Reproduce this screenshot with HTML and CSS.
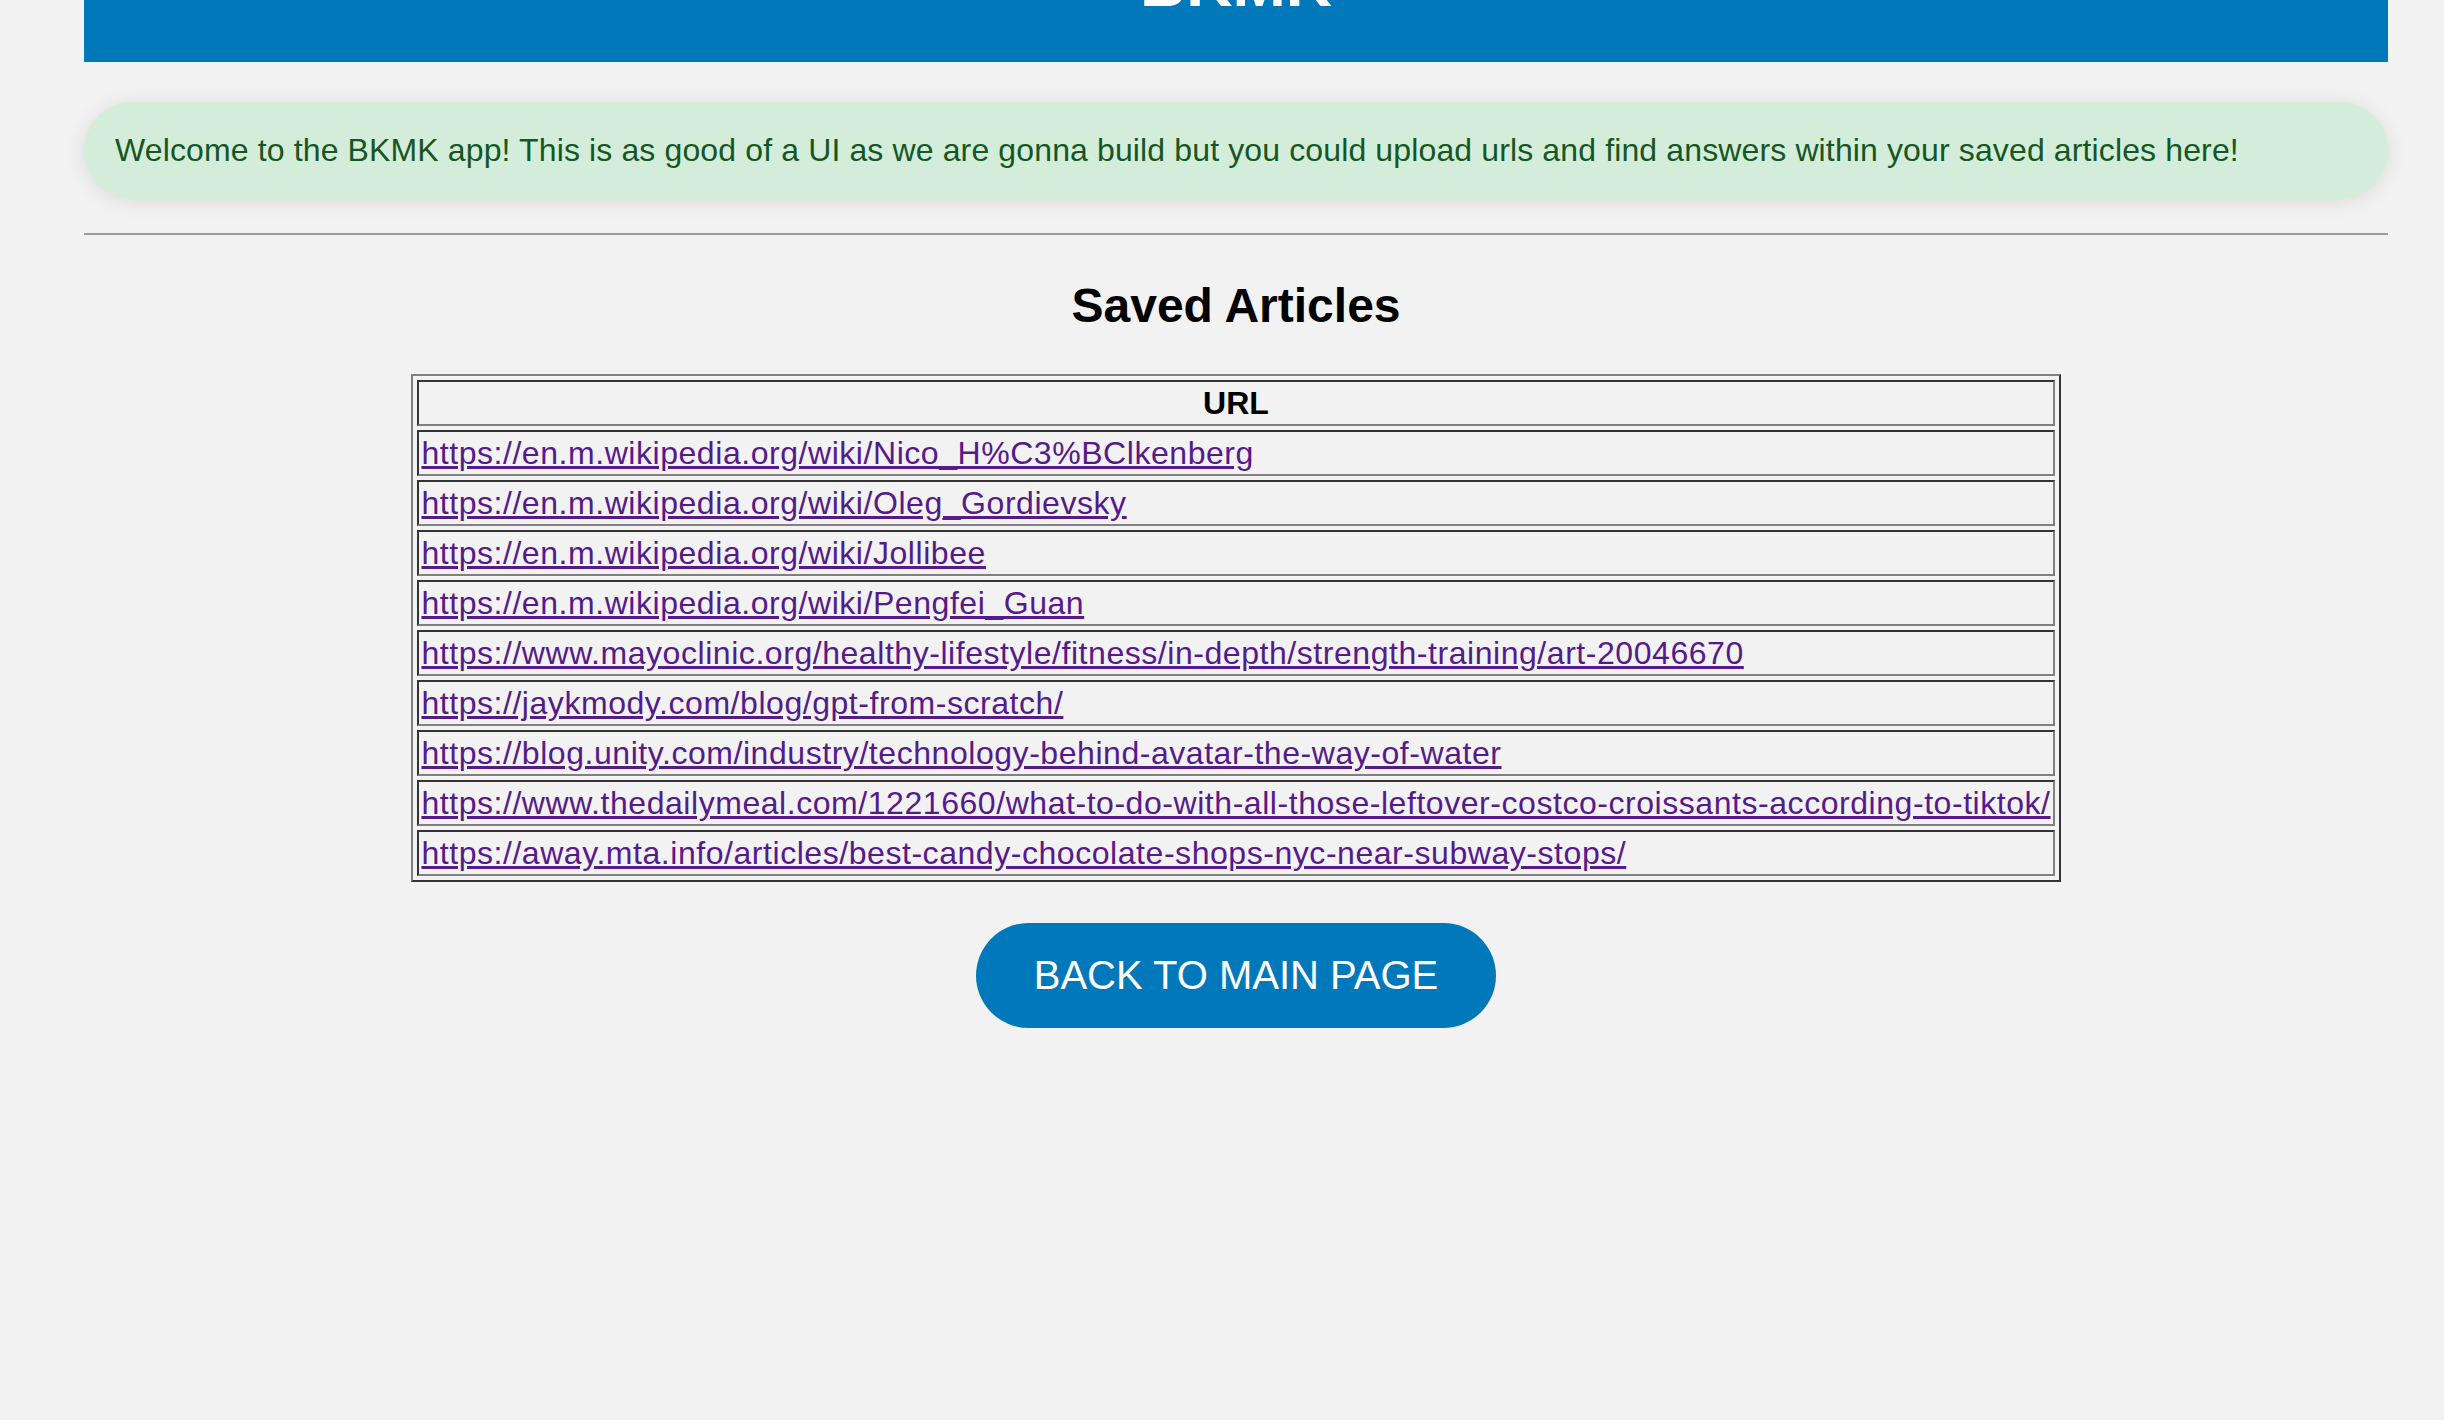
FILE: index.html
```html
<!DOCTYPE html>
<html lang="en">
<head>
<meta charset="utf-8">
<title>BKMK</title>
<link rel="stylesheet" href="styles.css">
</head>
<body>
<div class="page">
  <header class="site-header">
    <h1 class="site-title">BKMK</h1>
  </header>

  <div class="welcome">Welcome to the BKMK app! This is as good of a UI as we are gonna build but you could upload urls and find answers within your saved articles here!</div>

  <hr class="divider">

  <h2 class="section-title">Saved Articles</h2>

  <div class="table-wrap">
    <table class="articles">
      <thead>
        <tr><th>URL</th></tr>
      </thead>
      <tbody>
        <tr><td><a href="#">https://en.m.wikipedia.org/wiki/Nico_H%C3%BClkenberg</a></td></tr>
        <tr><td><a href="#">https://en.m.wikipedia.org/wiki/Oleg_Gordievsky</a></td></tr>
        <tr><td><a href="#">https://en.m.wikipedia.org/wiki/Jollibee</a></td></tr>
        <tr><td><a href="#">https://en.m.wikipedia.org/wiki/Pengfei_Guan</a></td></tr>
        <tr><td><a href="#">https://www.mayoclinic.org/healthy-lifestyle/fitness/in-depth/strength-training/art-20046670</a></td></tr>
        <tr><td><a href="#">https://jaykmody.com/blog/gpt-from-scratch/</a></td></tr>
        <tr><td><a href="#">https://blog.unity.com/industry/technology-behind-avatar-the-way-of-water</a></td></tr>
        <tr><td><a href="#">https://www.thedailymeal.com/1221660/what-to-do-with-all-those-leftover-costco-croissants-according-to-tiktok/</a></td></tr>
        <tr><td><a href="#">https://away.mta.info/articles/best-candy-chocolate-shops-nyc-near-subway-stops/</a></td></tr>
      </tbody>
    </table>
  </div>

  <div class="actions">
    <a class="back-button" href="#">BACK TO MAIN PAGE</a>
  </div>
</div>
</body>
</html>
```

FILE: styles.css
```css
html, body {
  margin: 0;
  padding: 0;
  background: #f2f2f2;
}

body {
  font-family: "Liberation Sans", Arial, Helvetica, sans-serif;
  font-size: 32px;
  color: #000;
}

.page {
  margin: 0 56px 0 84px;
  display: flex;
  flex-direction: column;
}

.site-header {
  background: #0178b9;
  display: flex;
  justify-content: center;
  height: 62px;
  overflow: visible;
}

.site-title {
  margin: -48px 0 0;
  font-size: 64px;
  line-height: 64px;
  font-weight: bold;
  color: #fff;
}

.welcome {
  margin-top: 40px;
  background: #d4edda;
  color: #155724;
  border-radius: 50px;
  padding: 30px 31px;
  font-size: 32px;
  line-height: 37px;
  letter-spacing: 0.13px;
  box-shadow: 0 2px 20px rgba(0, 0, 0, 0.1);
}

.divider {
  margin: 34px 0 0;
  border: 0;
  border-top: 2px solid #9a9a9a;
  height: 0;
}

.section-title {
  margin: 43px 0 0;
  text-align: center;
  font-size: 48px;
  line-height: 56px;
  font-weight: bold;
}

.table-wrap {
  margin-top: 40px;
  display: flex;
  justify-content: center;
}

.articles {
  border-collapse: separate;
  border-spacing: 4px;
  border-style: solid;
  border-width: 2px;
  border-color: #808080 #333333 #333333 #808080;
}

.articles th,
.articles td {
  border-style: solid;
  border-width: 2px;
  border-color: #333333 #808080 #808080 #333333;
  padding: 2px;
  line-height: 38px;
  font-size: 32px;
  white-space: nowrap;
}

.articles th {
  text-align: center;
  font-weight: bold;
}

.articles td {
  text-align: left;
  letter-spacing: 0.55px;
}

.articles a {
  color: #551a8b;
  text-decoration: underline;
}

.actions {
  margin-top: 41px;
  display: flex;
  justify-content: center;
}

.back-button {
  display: inline-block;
  background: #0178b9;
  color: #fff;
  text-decoration: none;
  font-size: 40px;
  line-height: 46px;
  padding: 29px 58px 30px;
  border-radius: 53px;
}
```
